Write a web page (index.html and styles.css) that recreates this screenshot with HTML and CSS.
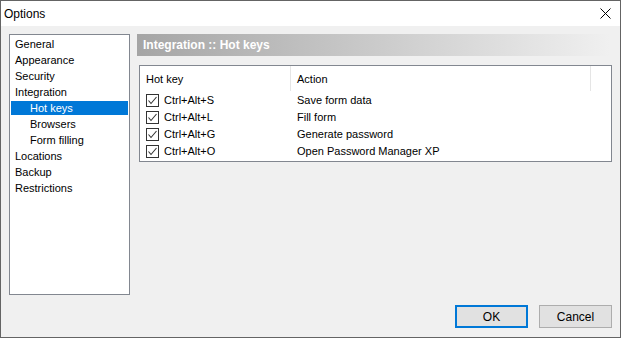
FILE: index.html
```html
<!DOCTYPE html>
<html lang="en">
<head>
  <meta charset="UTF-8" />
  <title>Options</title>
  <link rel="stylesheet" href="styles.css">
</head>
<body>
  <div class="window">
    <!-- Title bar -->
    <div class="titlebar">
      <span class="title">Options</span>
      <svg class="close" width="11" height="11" viewBox="0 0 11 11">
        <path d="M0.5 0.5 L10.5 10.5 M10.5 0.5 L0.5 10.5" stroke="#000" stroke-width="1" fill="none"/>
      </svg>
    </div>

    <div class="content">
      <div class="main">
        <!-- Category tree -->
        <ul class="tree">
          <li class="item">General</li>
          <li class="item">Appearance</li>
          <li class="item">Security</li>
          <li class="item">Integration</li>
          <li class="item sub selected">Hot keys</li>
          <li class="item sub">Browsers</li>
          <li class="item sub">Form filling</li>
          <li class="item">Locations</li>
          <li class="item">Backup</li>
          <li class="item">Restrictions</li>
        </ul>

        <!-- Page -->
        <div class="panel">
          <div class="panel-header">Integration :: Hot keys</div>

          <div class="list">
            <div class="list-head">
              <div class="col key">Hot key</div>
              <div class="col action">Action</div>
              <div class="col rest"></div>
            </div>
            <div class="row">
              <div class="key"><span class="check"></span>Ctrl+Alt+S</div>
              <div class="action">Save form data</div>
            </div>
            <div class="row">
              <div class="key"><span class="check"></span>Ctrl+Alt+L</div>
              <div class="action">Fill form</div>
            </div>
            <div class="row">
              <div class="key"><span class="check"></span>Ctrl+Alt+G</div>
              <div class="action">Generate password</div>
            </div>
            <div class="row">
              <div class="key"><span class="check"></span>Ctrl+Alt+O</div>
              <div class="action">Open Password Manager XP</div>
            </div>
          </div>
        </div>
      </div>

      <div class="buttons">
        <button class="btn default">OK</button>
        <button class="btn">Cancel</button>
      </div>
    </div>
  </div>
</body>
</html>
```

FILE: styles.css
```css
* {
  box-sizing: border-box;
  margin: 0;
  padding: 0;
}

body {
  font-family: 'Liberation Sans', Arial, sans-serif;
  font-size: 11px;
  color: #000;
  background: #f0f0f0;
}

.window {
  width: 621px;
  height: 338px;
  border: 1px solid #646464;
  background: #f0f0f0;
  display: flex;
  flex-direction: column;
}

.titlebar {
  height: 25px;
  background: #fff;
  display: flex;
  align-items: center;
  justify-content: space-between;
  padding: 0 9px 0 3px;
}

.title {
  font-size: 12px;
}

.content {
  flex: 1;
  padding: 8px 8px 0 8px;
  display: flex;
  flex-direction: column;
}

.main {
  display: flex;
  gap: 7px;
}

/* tree */
.tree {
  list-style: none;
  width: 121px;
  height: 261px;
  background: #fff;
  border: 1px solid #828790;
  padding-top: 1px;
}

.item {
  height: 16px;
  line-height: 14px;
  padding: 1px 0 1px 4px;
  margin: 0 1px;
  white-space: nowrap;
}

.item.sub {
  padding-left: 19px;
}

.item.selected {
  padding: 0;
  border-top: 1px solid #fff;
  border-bottom: 1px solid #fff;
  text-indent: 19px;
  background: #0078d7;
  color: #fff;
}

/* panel */
.panel {
  flex: 1;
}

.panel-header {
  height: 22px;
  line-height: 22px;
  padding-left: 6px;
  font-size: 12px;
  font-weight: bold;
  color: #fff;
  background: linear-gradient(to right, #a5a5a5, #f0f0f0);
  margin-right: 2px;
}

.list {
  margin: 9px 0 0 2px;
  height: 97px;
  background: #fff;
  border: 1px solid #828790;
}

.list-head {
  display: flex;
  height: 26px;
}

.list-head .col {
  line-height: 26px;
  height: 25px;
  border-right: 1px solid #e5e5e5;
}

.list-head .rest {
  border-right: none;
}

.key {
  width: 151px;
  padding-left: 6px;
  display: flex;
  align-items: center;
}

.action {
  width: 300px;
  padding-left: 6px;
}

.row {
  display: flex;
  height: 17px;
  line-height: 17px;
}

.check {
  width: 13px;
  height: 13px;
  border: 1px solid #333;
  margin-right: 5px;
  background: #fff url("data:image/svg+xml,%3Csvg xmlns='http://www.w3.org/2000/svg' width='11' height='11'%3E%3Cpath d='M1.5 5.5 L4 8.5 L9.5 2' stroke='%23333' stroke-width='1.1' fill='none'/%3E%3C/svg%3E") center no-repeat;
}

/* buttons */
.buttons {
  display: flex;
  justify-content: flex-end;
  gap: 11px;
  margin-top: 10px;
}

.btn {
  width: 73px;
  height: 23px;
  font-family: 'Liberation Sans', Arial, sans-serif;
  font-size: 12px;
  background: #e1e1e1;
  border: 1px solid #adadad;
}

.btn.default {
  border: 2px solid #0078d7;
}
```
